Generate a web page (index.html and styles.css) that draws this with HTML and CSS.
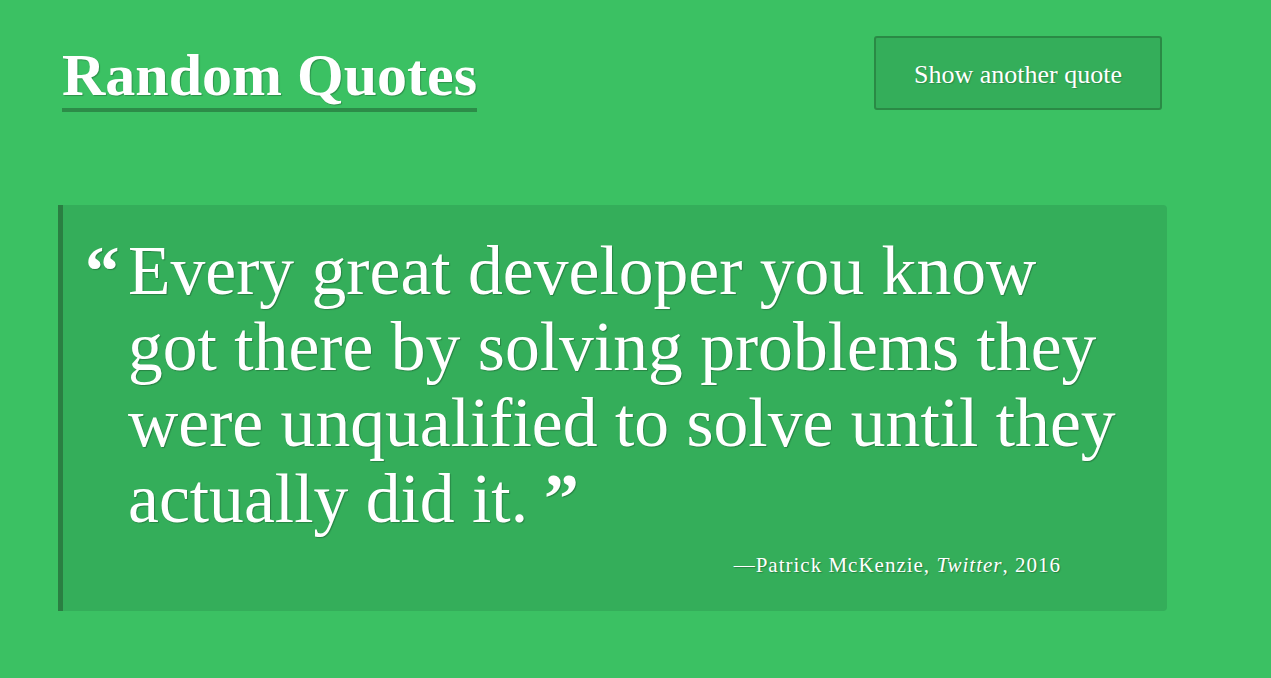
FILE: index.html
```html
<!DOCTYPE html>
<html lang="en">
<head>
<meta charset="utf-8">
<title>Random Quotes</title>
<link rel="stylesheet" href="styles.css">
</head>
<body>
<div class="page">
  <header class="header">
    <h1 class="title">Random Quotes</h1>
    <button class="btn" type="button">Show another quote</button>
  </header>
  <blockquote class="quote">
    <span class="mark">&ldquo;</span>
    <div class="body">
      <p class="text">Every great developer you know got there by solving problems they were unqualified to solve until they actually did it.<span class="close">&rdquo;</span></p>
      <p class="cite">&mdash;Patrick McKenzie, <em>Twitter</em>, 2016</p>
    </div>
  </blockquote>
</div>
</body>
</html>
```
FILE: styles.css
```css
html, body {
  margin: 0;
  padding: 0;
  background: #3bc163;
  height: 100%;
}
body {
  font-family: "Liberation Serif", "Times New Roman", serif;
  color: #fff;
}
.page {
  width: 1109px;
  margin-left: 58px;
  padding-top: 36px;
}
.header {
  display: flex;
  justify-content: space-between;
  align-items: flex-start;
}
.title {
  margin: 9px 0 0 4px;
  font-size: 60px;
  line-height: 60px;
  font-weight: 700;
  padding-bottom: 3px;
  border-bottom: 4px solid #2c8c48;
  text-shadow: 1px 1px 1px rgba(0,0,0,0.25);
}
.btn {
  margin: 0 5px 0 0;
  font-family: inherit;
  font-size: 26px;
  line-height: 30px;
  color: #fff;
  background: #34ae5a;
  border: 2px solid #2a8a45;
  border-radius: 3px;
  padding: 22px 38px 18px;
  text-shadow: 1px 1px 1px rgba(0,0,0,0.2);
  cursor: pointer;
}
.quote {
  margin: 93px 0 0 0;
  display: flex;
  background: #34ae5a;
  border-left: 5px solid #2a7f42;
  border-radius: 0 4px 4px 0;
  padding: 28px 36px 34px 22px;
  text-shadow: 1px 1px 1px rgba(0,0,0,0.25);
}
.mark {
  flex: 0 0 43px;
  font-size: 69px;
  line-height: 76px;
  font-weight: 700;
}
.body {
  flex: 1;
}
.text {
  margin: 0;
  font-size: 69.6px;
  line-height: 76px;
}
.close {
  font-weight: 700;
  margin-left: 0.23em;
}
.cite {
  margin: 16px 70px 0 0;
  text-align: right;
  font-size: 21px;
  line-height: 24px;
  letter-spacing: 1px;
}
.cite em {
  font-style: italic;
}
```
